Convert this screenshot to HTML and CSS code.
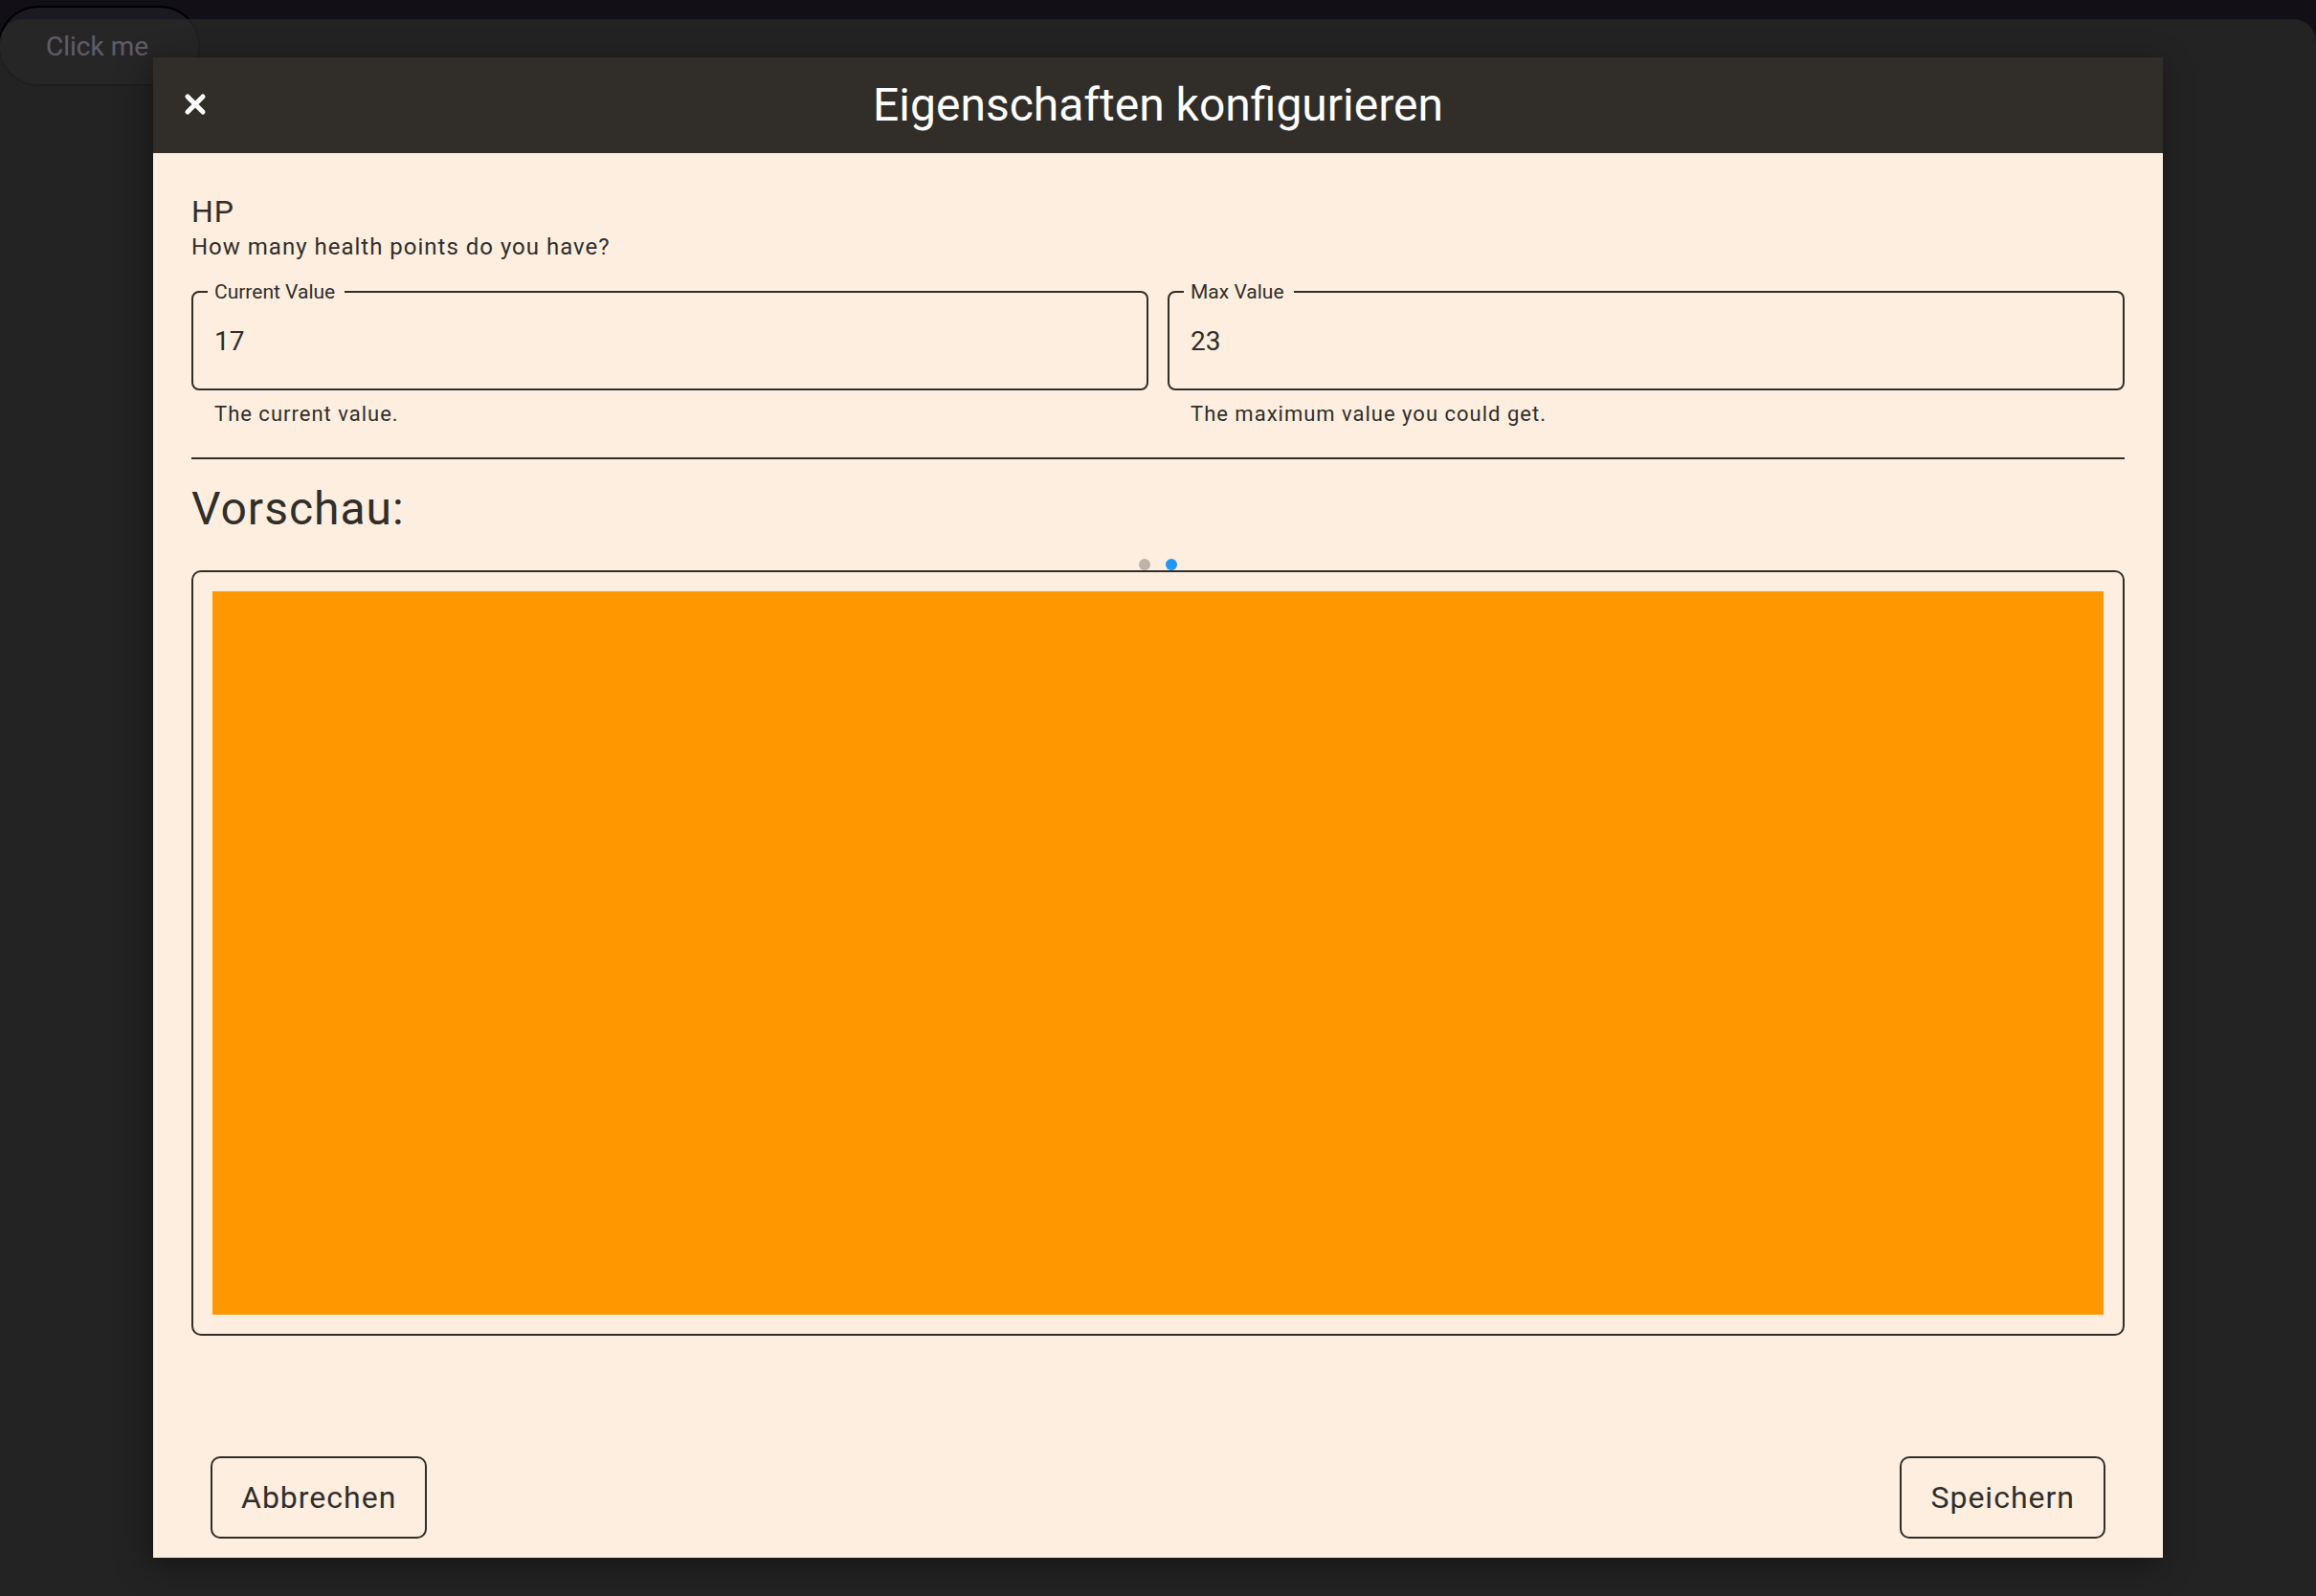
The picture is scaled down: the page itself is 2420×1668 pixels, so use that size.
FILE: index.html
```
<!DOCTYPE html>
<html lang="de">
<head>
<meta charset="utf-8">
<meta name="viewport" content="width=device-width, initial-scale=1">
<title>Eigenschaften konfigurieren</title>
<link rel="stylesheet" href="styles.css">
</head>
<body>
<button class="open-button" type="button">Click me</button>
<div class="backdrop">
  <section class="modal" role="dialog" aria-modal="true" aria-labelledby="modal-title">
    <header class="modal-header">
      <button class="close-button" type="button" aria-label="Schließen">
        <svg class="close-icon" viewBox="0 0 22 22" aria-hidden="true"><path d="M3 2 19 18M19 2 3 18"/></svg>
      </button>
      <h1 class="modal-title" id="modal-title">Eigenschaften konfigurieren</h1>
    </header>
    <form class="modal-body">
      <h2 class="stat-name">HP</h2>
      <p class="stat-help">How many health points do you have?</p>
      <div class="fields">
        <div class="field">
          <fieldset class="field-box">
            <legend class="field-legend"><label for="current-value">Current Value</label></legend>
            <input class="field-input" id="current-value" type="text" inputmode="numeric" value="17" aria-describedby="current-help">
          </fieldset>
          <p class="field-help" id="current-help">The current value.</p>
        </div>
        <div class="field">
          <fieldset class="field-box">
            <legend class="field-legend"><label for="max-value">Max Value</label></legend>
            <input class="field-input" id="max-value" type="text" inputmode="numeric" value="23" aria-describedby="max-help">
          </fieldset>
          <p class="field-help" id="max-help">The maximum value you could get.</p>
        </div>
      </div>
      <hr class="divider">
      <h2 class="preview-title">Vorschau:</h2>
      <div class="dots">
        <span class="dot"></span>
        <span class="dot dot-active"></span>
      </div>
      <div class="preview"><div class="preview-page"></div></div>
      <footer class="actions">
        <button class="action" type="button">Abbrechen</button>
        <button class="action" type="submit">Speichern</button>
      </footer>
    </form>
  </section>
</div>
</body>
</html>
```
FILE: styles.css
```
* {
  box-sizing: border-box;
}

body {
  margin: 0;
  min-height: 100vh;
  background: #121016;
  color: #312e29;
  font-family: Roboto, "Liberation Sans", sans-serif;
}

h1, h2, p {
  margin: 0;
  font-weight: 400;
}

button, input {
  font: inherit;
  color: inherit;
}

.open-button {
  position: absolute;
  top: 6px;
  left: -2px;
  height: 84px;
  padding: 0 52px 0 48px;
  border: 2px solid #000;
  border-radius: 42px;
  background: #1b1a20;
  color: #d8ccff;
  font-size: 28px;
}

.backdrop {
  position: absolute;
  inset: 20px 0 0;
  display: flex;
  padding: 40px 160px;
  border-radius: 24px 24px 0 0;
  background: rgba(44, 44, 42, 0.7);
}

.modal {
  flex: 1;
  display: flex;
  flex-direction: column;
  background: #fdeee0;
  box-shadow: -4px 8px 32px rgba(0, 0, 0, 0.4);
}

.modal-header {
  display: grid;
  grid-template-columns: 88px 1fr 88px;
  align-items: center;
  height: 100px;
  flex: none;
  background: #312e29;
  color: #fff;
}

.close-button {
  display: grid;
  place-items: center;
  height: 88px;
  padding: 0;
  border: 0;
  background: none;
}

.close-icon {
  width: 22px;
  height: 22px;
  fill: none;
  stroke: #fff;
  stroke-width: 5;
  stroke-linecap: round;
  overflow: visible;
}

.modal-title {
  font-size: 48px;
  line-height: 56px;
  text-align: center;
}

.modal-body {
  flex: 1;
  display: flex;
  flex-direction: column;
  padding: 40px 40px 20px;
}

.stat-name {
  font-size: 32px;
  line-height: 42px;
  letter-spacing: 1px;
}

.stat-help {
  font-size: 24px;
  line-height: 32px;
  letter-spacing: 1px;
}

.fields {
  display: grid;
  grid-template-columns: 1fr 1fr;
  gap: 20px;
  margin-top: 19px;
}

.field-box {
  height: 115px;
  margin: 0;
  padding: 0 22px;
  border: 2px solid #312e29;
  border-radius: 8px;
}

.field-legend {
  margin-left: -7px;
  padding: 0 10px 0 7px;
  font-size: 21px;
  line-height: 24px;
}

.field-input {
  display: block;
  width: 100%;
  height: 78px;
  padding: 0;
  border: 0;
  outline: 0;
  background: none;
  font-size: 28px;
}

.field-help {
  padding: 12px 24px 0;
  font-size: 22px;
  line-height: 26px;
  letter-spacing: 1px;
}

.divider {
  width: 100%;
  height: 2px;
  margin: 32px 0 24px;
  border: 0;
  background: #312e29;
}

.preview-title {
  font-size: 48px;
  line-height: 56px;
  letter-spacing: 1px;
}

.dots {
  display: flex;
  justify-content: center;
  gap: 16px;
  margin-top: 24px;
}

.dot {
  width: 12px;
  height: 12px;
  border-radius: 50%;
  background: #beb3a9;
}

.dot-active {
  background: #2196f3;
}

.preview {
  flex: 1;
  display: flex;
  padding: 20px;
  border: 2px solid #312e29;
  border-radius: 10px;
}

.preview-page {
  flex: 1;
  background: #ff9800;
}

.actions {
  display: flex;
  justify-content: space-between;
  margin-top: 126px;
  padding: 0 20px;
}

.action {
  height: 86px;
  padding: 0 30px;
  border: 2px solid #312e29;
  border-radius: 10px;
  background: none;
  font-size: 32px;
  letter-spacing: 1px;
}
```
